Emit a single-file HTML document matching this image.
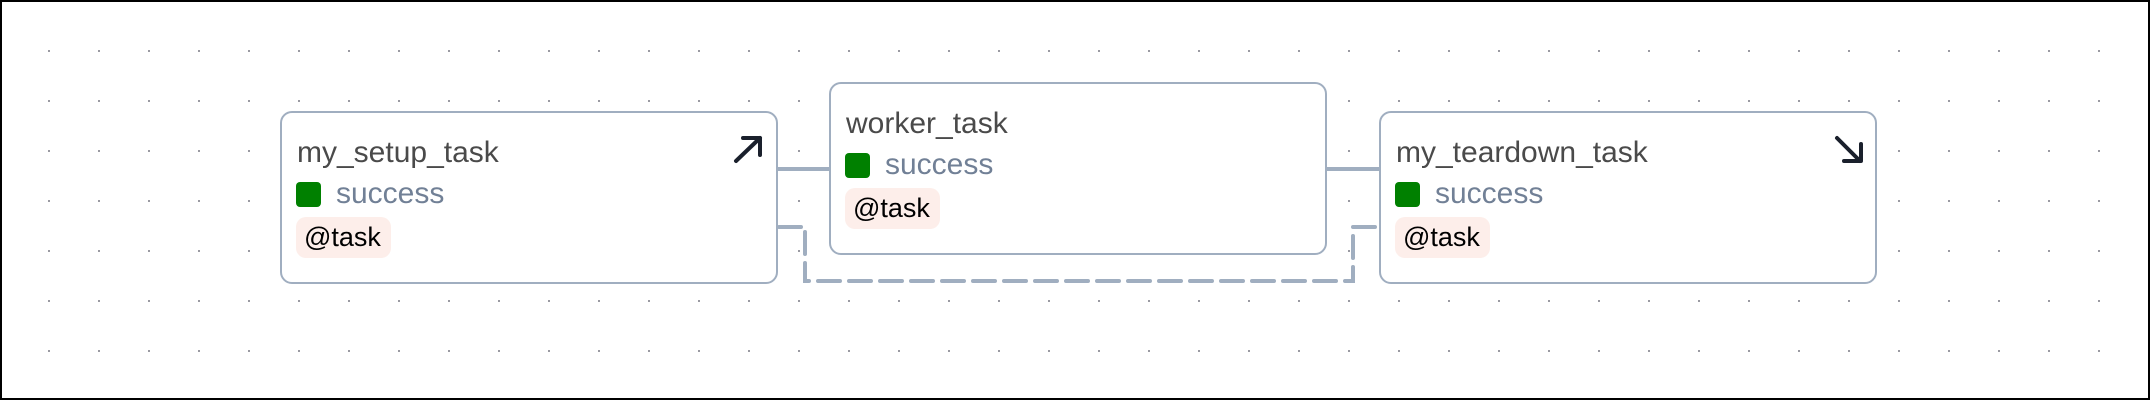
<!DOCTYPE html>
<html><head><meta charset="utf-8"><style>
html,body{margin:0;padding:0;background:#fff}
#c{position:relative;width:2150px;height:400px;overflow:hidden;background:#fff;font-family:"Liberation Sans",Arial,sans-serif}
#b{position:absolute;left:0;top:0;width:2146px;height:396px;border:2px solid #000;z-index:5;pointer-events:none}
.n{position:absolute;width:494px;height:169px;border:2px solid #a0aec0;border-radius:12px;background:#fff;box-sizing:content-box}
.t{position:absolute;left:15px;font-size:30px;color:#4a4a4a;line-height:1;white-space:nowrap}
.sq{position:absolute;left:14px;width:25px;height:25px;background:#008000;border-radius:4px}
.s{position:absolute;left:54px;font-size:30px;color:#718096;line-height:1}
.chip{position:absolute;left:14px;width:95px;height:41px;background:#fdeeea;border-radius:10px;font-size:27px;color:#000;line-height:41px;box-sizing:border-box;padding-left:8px}
svg{position:absolute;left:0;top:0}
</style></head><body><div id="c">
<svg width="2150" height="400">
<defs><pattern id="p" x="48" y="0" width="50" height="50" patternUnits="userSpaceOnUse"><rect x="0" y="0" width="2" height="2" fill="#9a9aa2"/></pattern></defs>
<rect width="2150" height="400" fill="url(#p)"/>
<g stroke="#a0aec0" stroke-width="4" fill="none" stroke-linecap="round">
<line x1="777" y1="169" x2="830" y2="169"/>
<line x1="1327" y1="169" x2="1379" y2="169"/>
<path d="M779 227 H805 V281 H1353 V227 H1379" stroke-dasharray="22 9"/>
</g>
</svg>
<div class="n" style="left:280px;top:111px">
<div class="t" style="top:25px">my_setup_task</div>
<div class="sq" style="top:69px"></div><div class="s" style="top:66px">success</div>
<div class="chip" style="top:104px">@task</div>
<svg width="494" height="169" style="left:-2px;top:-2px"><g stroke="#1a202c" stroke-width="4" fill="none" stroke-linecap="round" stroke-linejoin="round"><path d="M456 50 L480 27"/><path d="M463 27 H480 V44"/></g></svg>
</div>
<div class="n" style="left:829px;top:82px">
<div class="t" style="top:25px">worker_task</div>
<div class="sq" style="top:69px"></div><div class="s" style="top:66px">success</div>
<div class="chip" style="top:104px">@task</div>
</div>
<div class="n" style="left:1379px;top:111px">
<div class="t" style="top:25px">my_teardown_task</div>
<div class="sq" style="top:69px"></div><div class="s" style="top:66px">success</div>
<div class="chip" style="top:104px">@task</div>
<svg width="494" height="169" style="left:-2px;top:-2px"><g stroke="#1a202c" stroke-width="4" fill="none" stroke-linecap="round" stroke-linejoin="round"><path d="M458 27 L481 50"/><path d="M465 50 H482 V33"/></g></svg>
</div>
<div id="b"></div>
</div></body></html>
